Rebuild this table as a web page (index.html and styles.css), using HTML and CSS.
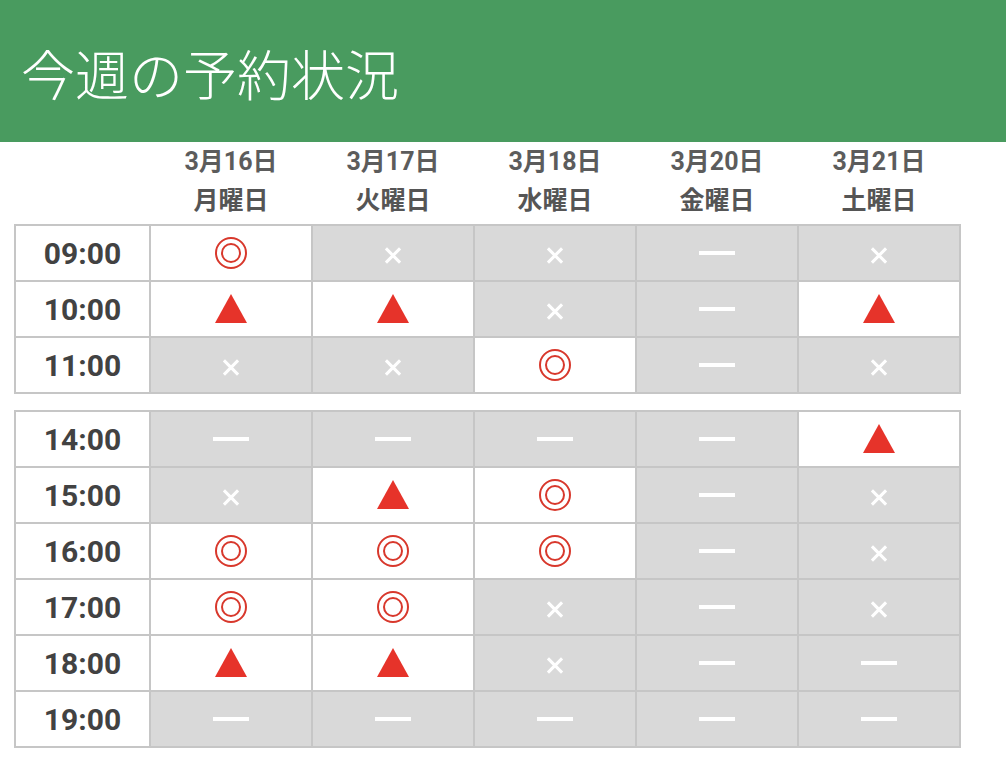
FILE: index.html
```html
<!DOCTYPE html>
<html lang="ja">
<head>
<meta charset="utf-8">
<link rel="stylesheet" href="styles.css">
</head>
<body>
<header class="banner"><h1 class="title">今週の予約状況</h1></header>
<div class="days">
  <div class="day-blank"></div>
  <div class="day"><span class="date">3月16日</span><span>月曜日</span></div>
  <div class="day"><span class="date">3月17日</span><span>火曜日</span></div>
  <div class="day"><span class="date">3月18日</span><span>水曜日</span></div>
  <div class="day"><span class="date">3月20日</span><span>金曜日</span></div>
  <div class="day"><span class="date">3月21日</span><span>土曜日</span></div>
</div>
<div class="grid">
  <div class="time">09:00</div>
  <div class="cell open"><i class="maru"></i></div>
  <div class="cell"><i class="batsu"></i></div>
  <div class="cell"><i class="batsu"></i></div>
  <div class="cell"><i class="bar"></i></div>
  <div class="cell"><i class="batsu"></i></div>

  <div class="time">10:00</div>
  <div class="cell open"><i class="sankaku"></i></div>
  <div class="cell open"><i class="sankaku"></i></div>
  <div class="cell"><i class="batsu"></i></div>
  <div class="cell"><i class="bar"></i></div>
  <div class="cell open"><i class="sankaku"></i></div>

  <div class="time">11:00</div>
  <div class="cell"><i class="batsu"></i></div>
  <div class="cell"><i class="batsu"></i></div>
  <div class="cell open"><i class="maru"></i></div>
  <div class="cell"><i class="bar"></i></div>
  <div class="cell"><i class="batsu"></i></div>
</div>
<div class="grid second">
  <div class="time">14:00</div>
  <div class="cell"><i class="bar"></i></div>
  <div class="cell"><i class="bar"></i></div>
  <div class="cell"><i class="bar"></i></div>
  <div class="cell"><i class="bar"></i></div>
  <div class="cell open"><i class="sankaku"></i></div>

  <div class="time">15:00</div>
  <div class="cell"><i class="batsu"></i></div>
  <div class="cell open"><i class="sankaku"></i></div>
  <div class="cell open"><i class="maru"></i></div>
  <div class="cell"><i class="bar"></i></div>
  <div class="cell"><i class="batsu"></i></div>

  <div class="time">16:00</div>
  <div class="cell open"><i class="maru"></i></div>
  <div class="cell open"><i class="maru"></i></div>
  <div class="cell open"><i class="maru"></i></div>
  <div class="cell"><i class="bar"></i></div>
  <div class="cell"><i class="batsu"></i></div>

  <div class="time">17:00</div>
  <div class="cell open"><i class="maru"></i></div>
  <div class="cell open"><i class="maru"></i></div>
  <div class="cell"><i class="batsu"></i></div>
  <div class="cell"><i class="bar"></i></div>
  <div class="cell"><i class="batsu"></i></div>

  <div class="time">18:00</div>
  <div class="cell open"><i class="sankaku"></i></div>
  <div class="cell open"><i class="sankaku"></i></div>
  <div class="cell"><i class="batsu"></i></div>
  <div class="cell"><i class="bar"></i></div>
  <div class="cell"><i class="bar"></i></div>

  <div class="time">19:00</div>
  <div class="cell"><i class="bar"></i></div>
  <div class="cell"><i class="bar"></i></div>
  <div class="cell"><i class="bar"></i></div>
  <div class="cell"><i class="bar"></i></div>
  <div class="cell"><i class="bar"></i></div>
</div>
</body>
</html>
```
FILE: styles.css
```css
* { box-sizing: border-box; }
body {
  margin: 0;
  background: #ffffff;
  font-family: Roboto, "Noto Sans CJK JP", sans-serif;
}
.banner {
  height: 142px;
  background: #499b5f;
  display: flex;
  align-items: center;
  padding-left: 21px;
}
.title {
  margin: 0;
  color: #ffffff;
  font-family: "Noto Sans CJK JP", sans-serif;
  font-weight: 300;
  font-size: 54px;
  line-height: 1;
  padding-top: 4px;
}
.days {
  display: grid;
  grid-template-columns: 135px repeat(5, 162px);
  margin-left: 15px;
  height: 82px;
}
.day {
  display: flex;
  flex-direction: column;
  align-items: center;
  font-weight: 700;
  font-size: 25px;
  line-height: 39px;
  color: #555555;
}
.date { color: #5c5c5c; }
.grid {
  display: grid;
  grid-template-columns: 133px repeat(5, 160px);
  grid-auto-rows: 54px;
  gap: 2px;
  padding: 2px;
  background: #c6c6c6;
  margin-left: 14px;
  width: 947px;
}
.grid.second { margin-top: 16px; }
.time {
  background: #ffffff;
  display: flex;
  align-items: center;
  justify-content: center;
  font-weight: 700;
  font-size: 30px;
  color: #424242;
  padding-top: 1px;
}
.cell {
  background: #d9d9d9;
  display: flex;
  align-items: center;
  justify-content: center;
}
.cell.open { background: #ffffff; }
.maru {
  position: relative;
  width: 32px;
  height: 32px;
  border: 2px solid #d8382c;
  border-radius: 50%;
}
.maru::after {
  content: "";
  position: absolute;
  left: 4px;
  top: 4px;
  width: 20px;
  height: 20px;
  border: 2px solid #d8382c;
  border-radius: 50%;
  box-sizing: border-box;
}
.sankaku {
  width: 0;
  height: 0;
  border-left: 16px solid transparent;
  border-right: 16px solid transparent;
  border-bottom: 29px solid #e6332a;
  margin-top: -2px;
}
.batsu {
  position: relative;
  width: 16px;
  height: 16px;
  margin-top: 4px;
}
.batsu::before,
.batsu::after {
  content: "";
  position: absolute;
  left: -2px;
  top: 6.5px;
  width: 20px;
  height: 3px;
  background: #ffffff;
  transform: rotate(45deg);
}
.batsu::after { transform: rotate(-45deg); }
.bar {
  width: 36px;
  height: 4px;
  background: #ffffff;
}
```
